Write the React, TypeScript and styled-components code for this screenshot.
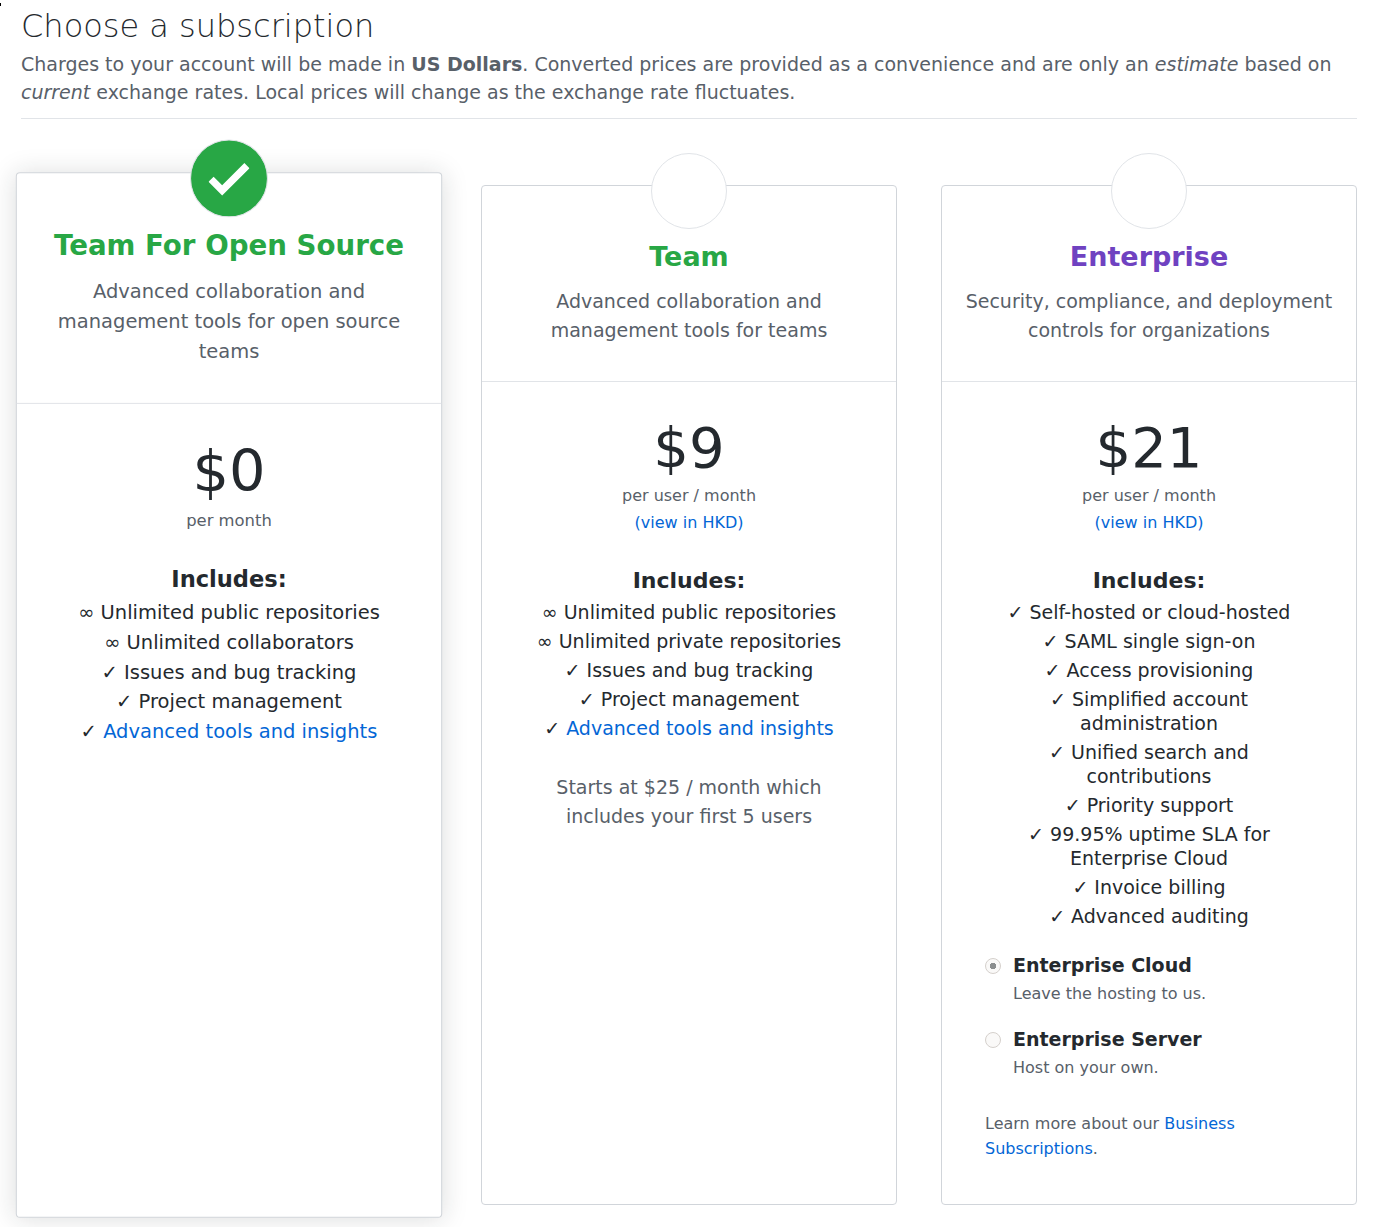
import React, { useState } from "react";
import styled, { createGlobalStyle, css } from "styled-components";

const GlobalStyle = createGlobalStyle`
  *, *::before, *::after { box-sizing: border-box; }
  html { background: #fff; }
  body {
    margin: 0;
    color: #24292e;
    font-family: "DejaVu Sans", Verdana, sans-serif;
    font-size: 19px;
    line-height: 24px;
  }
  h1, h2, h3, p, ul, fieldset { margin: 0; padding: 0; }
`;

const Page = styled.main`
  position: relative;
  padding: 6px 19px 22px 21px;
`;

const EdgeMark = styled.span`
  position: absolute;
  top: 3px;
  left: 0;
  width: 1px;
  height: 3px;
  background: #000;
`;

const PageHeader = styled.header`
  padding-bottom: 12px;
  border-bottom: 1px solid #e1e4e8;
`;

const PageTitle = styled.h1`
  font-size: 32px;
  font-weight: 200;
  line-height: 40px;
  margin-bottom: 4px;
`;

const Intro = styled.p`
  color: #586069;
  line-height: 28px;
`;

const Plans = styled.section`
  display: grid;
  grid-template-columns: repeat(3, minmax(0, 1fr));
  gap: 44px;
  margin-top: 66px;
`;

const Card = styled.article<{ $selected: boolean }>`
  display: flex;
  flex-direction: column;
  background: #fff;
  border: 1px solid #d1d5da;
  border-radius: 4px;
  ${(p) =>
    p.$selected &&
    css`
      transform: scale(1.025);
      box-shadow: 0 1px 25px rgba(27, 31, 35, 0.15);
    `}
`;

const CardHeader = styled.header`
  display: flex;
  flex-direction: column;
  align-items: center;
  padding: 0 20px 36px;
  border-bottom: 1px solid #e1e4e8;
  text-align: center;
`;

const Picker = styled.div`
  position: relative;
  width: 76px;
  height: 76px;
  margin: -33px 0 8px;
`;

const PickerInput = styled.input`
  appearance: none;
  display: block;
  width: 100%;
  height: 100%;
  margin: 0;
  background: #fff;
  border: 1px solid #e1e4e8;
  border-radius: 50%;
  cursor: pointer;
  &:checked { background: #28a745; }
`;

const PickerCheck = styled.svg`
  position: absolute;
  inset: 0;
  margin: auto;
  width: 40px;
  height: 54px;
  fill: #fff;
  pointer-events: none;
`;

const PlanName = styled.label<{ $tone: string }>`
  color: ${(p) => p.$tone};
  font-size: 27px;
  font-weight: 700;
  line-height: 40px;
  margin-bottom: 10px;
  cursor: pointer;
`;

const PlanSummary = styled.p`
  color: #586069;
  line-height: 29px;
`;

const CardBody = styled.div`
  padding: 38px 43px 43px;
  text-align: center;
`;

const Price = styled.p`
  font-size: 56px;
  line-height: 56px;
  margin-bottom: 6px;
`;

const PriceNote = styled.p`
  color: #586069;
  font-size: 16px;
  line-height: 27px;
`;

const Link = styled.a`
  color: #0366d6;
  text-decoration: none;
  &:hover { text-decoration: underline; }
`;

const IncludesTitle = styled.h3`
  font-size: 22px;
  line-height: 28px;
  margin: 31px 0 5px;
`;

const Features = styled.ul`
  display: flex;
  flex-direction: column;
  gap: 5px;
  list-style: none;
`;

const Footnote = styled.p`
  color: #586069;
  line-height: 29px;
  margin-top: 33px;
`;

const Hosting = styled.fieldset`
  display: flex;
  flex-direction: column;
  gap: 19px;
  min-width: 0;
  margin-top: 23px;
  border: 0;
  text-align: left;
`;

const HostingOption = styled.div`
  display: grid;
  grid-template-columns: 16px 1fr;
  gap: 1px 12px;
  align-items: center;
`;

const HostingRadio = styled.input`
  appearance: none;
  width: 16px;
  height: 16px;
  margin: 0;
  background: #faf9f8;
  border: 1px solid #d5d0cc;
  border-radius: 50%;
  &:checked {
    background: radial-gradient(circle, #8b8e8f 0 3px, #faf9f8 3px);
  }
`;

const HostingLabel = styled.label`
  font-weight: 700;
  line-height: 29px;
`;

const HostingNote = styled.p`
  grid-column: 2;
  color: #586069;
  font-size: 16px;
  line-height: 25px;
`;

const LearnMore = styled.p`
  color: #586069;
  font-size: 16px;
  line-height: 25px;
  margin-top: 31px;
  text-align: left;
`;

type Feature = { mark: "∞" | "✓"; text: string; link?: boolean };

type Plan = {
  id: string;
  name: string;
  tone: string;
  summary: string;
  price: string;
  period: string;
  converted?: boolean;
  features: Feature[];
  footnote?: string;
  hosting?: { id: string; label: string; note: string }[];
};

const plans: Plan[] = [
  {
    id: "open-source",
    name: "Team For Open Source",
    tone: "#28a745",
    summary: "Advanced collaboration and management tools for open source teams",
    price: "$0",
    period: "per month",
    features: [
      { mark: "∞", text: "Unlimited public repositories" },
      { mark: "∞", text: "Unlimited collaborators" },
      { mark: "✓", text: "Issues and bug tracking" },
      { mark: "✓", text: "Project management" },
      { mark: "✓", text: "Advanced tools and insights", link: true },
    ],
  },
  {
    id: "team",
    name: "Team",
    tone: "#28a745",
    summary: "Advanced collaboration and management tools for teams",
    price: "$9",
    period: "per user / month",
    converted: true,
    features: [
      { mark: "∞", text: "Unlimited public repositories" },
      { mark: "∞", text: "Unlimited private repositories" },
      { mark: "✓", text: "Issues and bug tracking" },
      { mark: "✓", text: "Project management" },
      { mark: "✓", text: "Advanced tools and insights", link: true },
    ],
    footnote: "Starts at $25 / month which includes your first 5 users",
  },
  {
    id: "enterprise",
    name: "Enterprise",
    tone: "#6f42c1",
    summary: "Security, compliance, and deployment controls for organizations",
    price: "$21",
    period: "per user / month",
    converted: true,
    features: [
      { mark: "✓", text: "Self-hosted or cloud-hosted" },
      { mark: "✓", text: "SAML single sign-on" },
      { mark: "✓", text: "Access provisioning" },
      { mark: "✓", text: "Simplified account administration" },
      { mark: "✓", text: "Unified search and contributions" },
      { mark: "✓", text: "Priority support" },
      { mark: "✓", text: "99.95% uptime SLA for Enterprise Cloud" },
      { mark: "✓", text: "Invoice billing" },
      { mark: "✓", text: "Advanced auditing" },
    ],
    hosting: [
      { id: "cloud", label: "Enterprise Cloud", note: "Leave the hosting to us." },
      { id: "server", label: "Enterprise Server", note: "Host on your own." },
    ],
  },
];

type PlanCardProps = { plan: Plan; selected: boolean; onSelect: () => void };

function PlanCard({ plan, selected, onSelect }: PlanCardProps) {
  return (
    <Card $selected={selected}>
      <CardHeader>
        <Picker>
          <PickerInput
            type="radio"
            name="plan"
            id={plan.id}
            checked={selected}
            onChange={onSelect}
          />
          {selected && (
            <PickerCheck viewBox="0 0 12 16" aria-hidden="true">
              <path d="M12 5l-8 8-4-4 1.5-1.5L4 10l6.5-6.5L12 5z" />
            </PickerCheck>
          )}
        </Picker>
        <PlanName htmlFor={plan.id} $tone={plan.tone}>{plan.name}</PlanName>
        <PlanSummary>{plan.summary}</PlanSummary>
      </CardHeader>
      <CardBody>
        <Price>{plan.price}</Price>
        <PriceNote>{plan.period}</PriceNote>
        {plan.converted && (
          <PriceNote>
            <Link href="#hkd">(view in HKD)</Link>
          </PriceNote>
        )}
        <IncludesTitle>Includes:</IncludesTitle>
        <Features>
          {plan.features.map((f) => (
            <li key={f.text}>
              {f.mark} {f.link ? <Link href="#tools">{f.text}</Link> : f.text}
            </li>
          ))}
        </Features>
        {plan.footnote && <Footnote>{plan.footnote}</Footnote>}
        {plan.hosting && (
          <>
            <Hosting>
              {plan.hosting.map((h, i) => (
                <HostingOption key={h.id}>
                  <HostingRadio
                    type="radio"
                    name="hosting"
                    id={h.id}
                    defaultChecked={i === 0}
                    disabled={!selected}
                  />
                  <HostingLabel htmlFor={h.id}>{h.label}</HostingLabel>
                  <HostingNote>{h.note}</HostingNote>
                </HostingOption>
              ))}
            </Hosting>
            <LearnMore>
              Learn more about our <Link href="#business">Business Subscriptions</Link>.
            </LearnMore>
          </>
        )}
      </CardBody>
    </Card>
  );
}

export default function App() {
  const [selected, setSelected] = useState("open-source");
  return (
    <>
      <GlobalStyle />
      <Page>
        <EdgeMark />
        <PageHeader>
          <PageTitle>Choose a subscription</PageTitle>
          <Intro>
            Charges to your account will be made in <strong>US Dollars</strong>. Converted
            prices are provided as a convenience and are only an <em>estimate</em> based on{" "}
            <em>current</em> exchange rates. Local prices will change as the exchange rate
            fluctuates.
          </Intro>
        </PageHeader>
        <Plans>
          {plans.map((plan) => (
            <PlanCard
              key={plan.id}
              plan={plan}
              selected={selected === plan.id}
              onSelect={() => setSelected(plan.id)}
            />
          ))}
        </Plans>
      </Page>
    </>
  );
}
